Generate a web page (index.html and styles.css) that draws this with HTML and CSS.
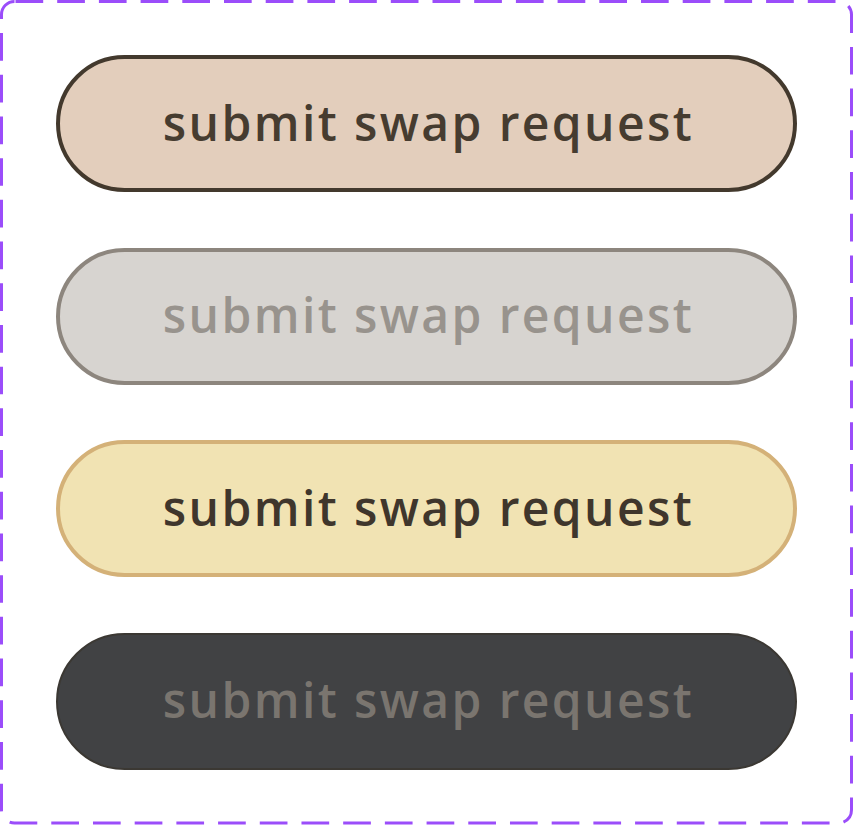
FILE: index.html
```html
<!DOCTYPE html>
<html lang="en">
<head>
<meta charset="utf-8">
<title>Buttons</title>
<link rel="stylesheet" href="styles.css">
</head>
<body>
<div class="frame">
  <svg class="dash" width="853" height="825" viewBox="0 0 853 825" aria-hidden="true">
    <rect x="1.5" y="1.5" width="850" height="821.5" rx="13" ry="13" fill="none" stroke="#9b4dfa" stroke-width="3" stroke-dasharray="27.7 14" stroke-dashoffset="-1"/>
  </svg>
  <button class="btn btn-primary">submit swap request</button>
  <button class="btn btn-disabled">submit swap request</button>
  <button class="btn btn-warm">submit swap request</button>
  <button class="btn btn-dark">submit swap request</button>
</div>
</body>
</html>
```

FILE: styles.css
```css
html, body {
  margin: 0;
  padding: 0;
  background: #ffffff;
}

.frame {
  position: relative;
  box-sizing: border-box;
  width: 853px;
  height: 825px;
  padding: 55px 56px 55px 56px;
  display: flex;
  flex-direction: column;
  gap: 55.5px;
  background: #ffffff;
}

.dash {
  position: absolute;
  left: 0;
  top: 0;
  pointer-events: none;
}

.btn {
  box-sizing: border-box;
  width: 741px;
  height: 137px;
  border-radius: 68.5px;
  border: 4px solid transparent;
  font-family: "Open Sans", "Noto Sans", sans-serif;
  font-weight: 600;
  font-size: 48px;
  letter-spacing: 2.4px;
  display: flex;
  align-items: center;
  justify-content: center;
  padding: 0 0 3px 4px;
  margin: 0;
  cursor: pointer;
}

.btn-primary {
  background: #e3cebc;
  border-color: #43392d;
  color: #463c30;
}

.btn-disabled {
  background: #d7d4d0;
  border-color: #8d867e;
  color: #98938d;
}

.btn-warm {
  background: #f1e3b3;
  border-color: #d4b178;
  color: #3f362c;
}

.btn-dark {
  background: #414244;
  border: 2px solid #3b3833;
  color: #7a756f;
}
```
